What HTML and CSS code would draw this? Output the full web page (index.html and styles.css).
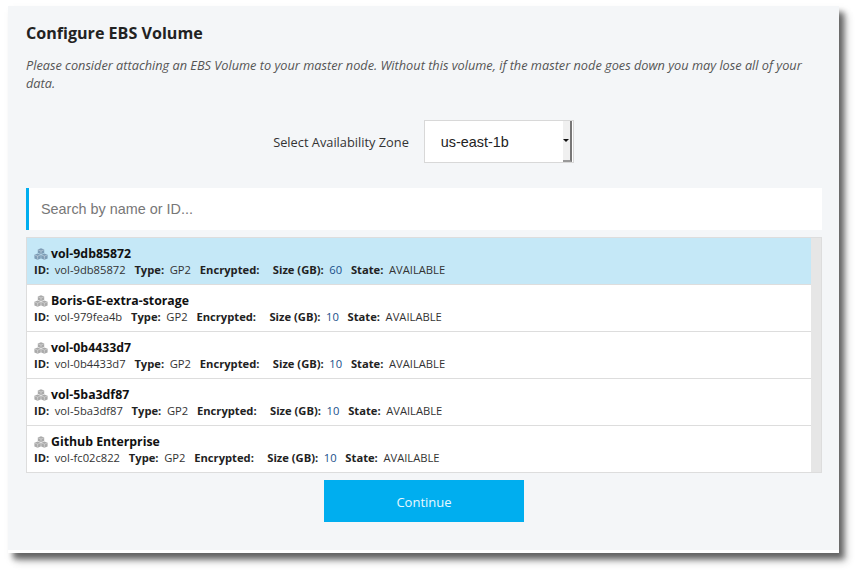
FILE: index.html
```html
<!DOCTYPE html>
<html lang="en">
<head>
    <meta charset="UTF-8">
    <meta name="viewport" content="width=device-width, initial-scale=1.0">
    <title>Configure EBS Volume</title>
    <link rel="stylesheet" href="styles.css">
</head>
<body>
    <svg class="icon-defs" width="0" height="0" aria-hidden="true">
        <symbol id="cubes" viewBox="0 0 14 12">
            <path d="M7 0.3 10.2 1.6V5L7 6.3 3.8 5V1.6Z"/>
            <path d="M3.6 5.4 6.8 6.7V10.4L3.6 11.7 0.4 10.4V6.7Z"/>
            <path d="M10.4 5.4 13.6 6.7V10.4L10.4 11.7 7.2 10.4V6.7Z"/>
            <path class="cube-edges" d="M4.2 1.9 7 3 9.8 1.9M7 3V5.9M0.8 7 3.6 8.1 6.4 7M3.6 8.1V11.3M7.6 7 10.4 8.1 13.2 7M10.4 8.1V11.3"/>
        </symbol>
    </svg>

    <main class="card">
        <h1>Configure EBS Volume</h1>
        <p class="hint">Please consider attaching an EBS Volume to your master node. Without this volume, if the master node goes down you may lose all of your data.</p>

        <div class="zone-row">
            <label for="zone">Select Availability Zone</label>
            <div class="select-box">
                <select id="zone">
                    <option value="us-east-1b">us-east-1b</option>
                    <option value="us-east-1c">us-east-1c</option>
                </select>
                <span class="select-arrow"></span>
            </div>
        </div>

        <input class="search" type="text" placeholder="Search by name or ID...">

        <div class="volume-list">
            <ul class="volumes">
                <li class="volume selected">
                    <div class="volume-name"><svg class="cube-icon"><use href="#cubes"/></svg>vol-9db85872</div>
                    <div class="volume-info">
                        <b>ID:</b><span>vol-9db85872</span>
                        <b>Type:</b><span>GP2</span>
                        <b>Encrypted:</b><span></span>
                        <b>Size (GB):</b><span class="size">60</span>
                        <b>State:</b><span>AVAILABLE</span>
                    </div>
                </li>
                <li class="volume">
                    <div class="volume-name"><svg class="cube-icon"><use href="#cubes"/></svg>Boris-GE-extra-storage</div>
                    <div class="volume-info">
                        <b>ID:</b><span>vol-979fea4b</span>
                        <b>Type:</b><span>GP2</span>
                        <b>Encrypted:</b><span></span>
                        <b>Size (GB):</b><span class="size">10</span>
                        <b>State:</b><span>AVAILABLE</span>
                    </div>
                </li>
                <li class="volume">
                    <div class="volume-name"><svg class="cube-icon"><use href="#cubes"/></svg>vol-0b4433d7</div>
                    <div class="volume-info">
                        <b>ID:</b><span>vol-0b4433d7</span>
                        <b>Type:</b><span>GP2</span>
                        <b>Encrypted:</b><span></span>
                        <b>Size (GB):</b><span class="size">10</span>
                        <b>State:</b><span>AVAILABLE</span>
                    </div>
                </li>
                <li class="volume">
                    <div class="volume-name"><svg class="cube-icon"><use href="#cubes"/></svg>vol-5ba3df87</div>
                    <div class="volume-info">
                        <b>ID:</b><span>vol-5ba3df87</span>
                        <b>Type:</b><span>GP2</span>
                        <b>Encrypted:</b><span></span>
                        <b>Size (GB):</b><span class="size">10</span>
                        <b>State:</b><span>AVAILABLE</span>
                    </div>
                </li>
                <li class="volume">
                    <div class="volume-name"><svg class="cube-icon"><use href="#cubes"/></svg>Github Enterprise</div>
                    <div class="volume-info">
                        <b>ID:</b><span>vol-fc02c822</span>
                        <b>Type:</b><span>GP2</span>
                        <b>Encrypted:</b><span></span>
                        <b>Size (GB):</b><span class="size">10</span>
                        <b>State:</b><span>AVAILABLE</span>
                    </div>
                </li>
            </ul>
            <div class="scrollbar"></div>
        </div>

        <button class="continue">Continue</button>
    </main>
</body>
</html>
```

FILE: styles.css
```css
html, body {
    height: 100%;
}

body {
    margin: 0;
    padding: 6px 23px 0 8px;
    box-sizing: border-box;
    background: #fff;
    font-family: "Open Sans", sans-serif;
    color: #222;
    overflow: hidden;
}

.icon-defs {
    display: block;
}

.card {
    height: 547px;
    box-sizing: border-box;
    padding: 17px 17px 0 18px;
    background: #f4f6f8;
    border-bottom: 3px solid #fff;
    box-shadow: 5px 6px 6px rgba(0, 0, 0, 0.55), 8px 9px 8px rgba(0, 0, 0, 0.15);
}

h1 {
    margin: 0;
    font-size: 16.1px;
    line-height: 20px;
    font-weight: 700;
}

.hint {
    margin: 13px 0 0;
    font-size: 12.74px;
    line-height: 18px;
    font-style: italic;
    color: #555;
}

.zone-row {
    display: flex;
    justify-content: center;
    align-items: center;
    gap: 15px;
    margin-top: 28px;
    padding-right: 1px;
}

.zone-row label {
    font-size: 12.8px;
    color: #333;
}

.select-box {
    display: flex;
    width: 150px;
    height: 43px;
    box-sizing: border-box;
    background: #fff;
    border: 1px solid #d8d8d8;
}

.select-box select {
    flex: 1;
    min-width: 0;
    padding: 0 0 0 16px;
    border: 0;
    background: #fff;
    font-family: "Liberation Sans", sans-serif;
    font-size: 14.4px;
    color: #222;
    appearance: none;
    outline: none;
}

.select-arrow {
    width: 7px;
    margin-right: 1px;
    background: #f0f0f0;
    border-right: 2px solid #777;
    border-bottom: 2px solid #999;
    display: flex;
    align-items: center;
    justify-content: center;
}

.select-arrow::after {
    content: "";
    border-left: 3px solid transparent;
    border-right: 3px solid transparent;
    border-top: 3px solid #111;
}

.search {
    display: block;
    width: 100%;
    height: 42px;
    box-sizing: border-box;
    margin-top: 25px;
    padding: 0 12px;
    border: 0;
    border-left: 3px solid #00aeef;
    background: #fff;
    font-family: "Liberation Sans", sans-serif;
    font-size: 14.4px;
    outline: none;
}

.search::placeholder {
    color: #777;
}

.volume-list {
    display: flex;
    height: 236px;
    box-sizing: border-box;
    margin-top: 7px;
    background: #fff;
    border: 1px solid #ddd;
}

.volumes {
    flex: 1;
    margin: 0;
    padding: 0;
    list-style: none;
}

.scrollbar {
    width: 10px;
    background: #e6e6e6;
}

.volume {
    height: 47px;
    box-sizing: border-box;
    padding: 8px 7px 0;
    border-bottom: 1px solid #ddd;
}

.volume:last-child {
    border-bottom: 0;
}

.volume.selected {
    background: #c5e8f7;
}

.volume-name {
    display: flex;
    align-items: center;
    font-size: 12.3px;
    line-height: 16px;
    font-weight: 700;
    color: #111;
}

.cube-icon {
    width: 14px;
    height: 12px;
    margin-right: 3px;
    fill: #aaa;
}

.cube-edges {
    fill: none;
    stroke: #fff;
    stroke-width: 0.5;
    stroke-opacity: 0.7;
}

.selected .cube-icon {
    fill: #7d9cb5;
}

.volume-info {
    display: flex;
    font-size: 11.2px;
    line-height: 15px;
    color: #333;
}

.volume-info b {
    margin-right: 5.6px;
    color: #222;
}

.volume-info span {
    margin-right: 8.8px;
}

.volume-info span:empty {
    margin-right: 7.8px;
}

.volume-info .size {
    color: #1a4f8a;
}

.continue {
    display: block;
    width: 200px;
    height: 42px;
    margin: 7px auto 0;
    padding: 2px 0 0;
    border: 0;
    background: #00aeef;
    color: #e8f8ff;
    font-family: "Open Sans", sans-serif;
    font-size: 13px;
    cursor: pointer;
}
```
